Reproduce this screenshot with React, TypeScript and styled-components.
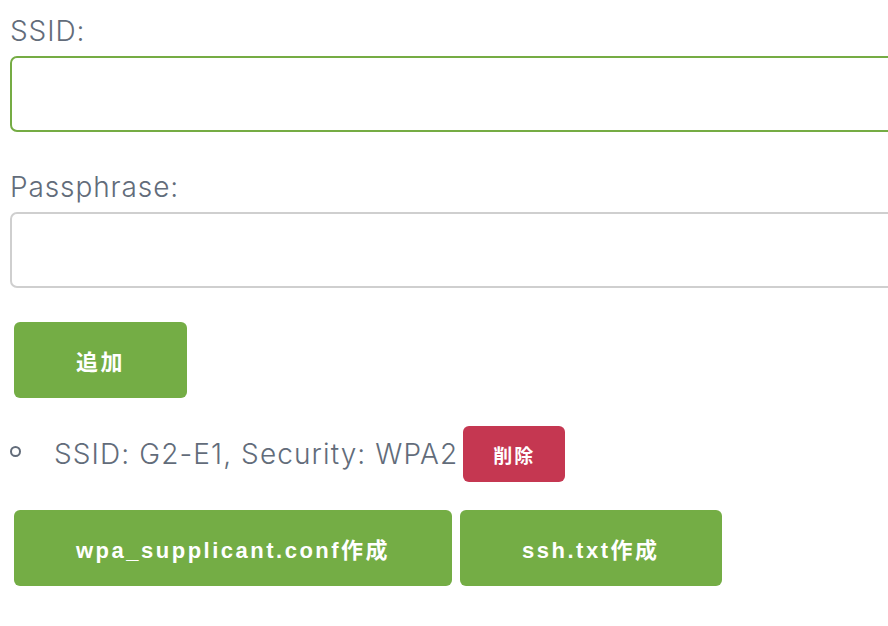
import React, { useEffect, useRef } from "react"
import styled, { createGlobalStyle } from "styled-components"

const GlobalStyle = createGlobalStyle`
  html, body {
    margin: 0;
    padding: 0;
    overflow: clip;
    background: #ffffff;
  }
  body {
    font-family: Inter, "Liberation Sans", "Noto Sans CJK JP", sans-serif;
  }
`

const networks = [{ ssid: "G2-E1", security: "WPA2" }]

export default function App() {
  const ssidRef = useRef<HTMLInputElement>(null)

  useEffect(() => {
    ssidRef.current?.focus({ preventScroll: true })
  }, [])

  return (
    <>
      <GlobalStyle />
      <StyledViewport>
        <StyledPage>
          <StyledField $gap={38}>
            <StyledLabel htmlFor="ssid">SSID:</StyledLabel>
            <StyledInput ref={ssidRef} id="ssid" type="text" $active />
          </StyledField>
          <StyledField $gap={34}>
            <StyledLabel htmlFor="pass">Passphrase:</StyledLabel>
            <StyledInput id="pass" type="text" />
          </StyledField>
          <StyledActions>
            <StyledButton>追加</StyledButton>
          </StyledActions>
          <StyledList>
            {networks.map((n) => (
              <StyledItem key={n.ssid}>
                SSID: {n.ssid}, Security: {n.security}
                <StyledButton $variant="danger" $small>
                  削除
                </StyledButton>
              </StyledItem>
            ))}
          </StyledList>
          <StyledActions>
            <StyledButton>wpa_supplicant.conf作成</StyledButton>
            <StyledButton>ssh.txt作成</StyledButton>
          </StyledActions>
        </StyledPage>
      </StyledViewport>
    </>
  )
}

const StyledViewport = styled.div`
  width: 100vw;
  height: 100vh;
  overflow: clip;
`

const StyledPage = styled.main`
  width: 1000px;
  padding: 14px 10px 0;
  display: flex;
  flex-direction: column;
`

const StyledField = styled.div<{ $gap: number }>`
  display: flex;
  flex-direction: column;
  margin-bottom: ${({ $gap }) => $gap}px;
`

const StyledLabel = styled.label`
  font-size: 28px;
  font-weight: 300;
  line-height: 34px;
  letter-spacing: 0.9px;
  color: #626c7a;
  margin-bottom: 8px;
`

const StyledInput = styled.input<{ $active?: boolean }>`
  box-sizing: border-box;
  height: 76px;
  width: 100%;
  border: 2px solid ${({ $active }) => ($active ? "#75ac44" : "#cfcfcf")};
  border-radius: 7px;
  padding: 0 21px;
  font-size: 30px;
  font-family: inherit;
  color: #333;
  caret-color: #000;
  outline: none;
`

const StyledActions = styled.div`
  display: flex;
  gap: 8px;
  padding-left: 4px;
`

const StyledButton = styled.button<{ $variant?: "danger"; $small?: boolean }>`
  height: ${({ $small }) => ($small ? "56px" : "76px")};
  padding: ${({ $small }) => ($small ? "0 30px" : "0 62px")};
  border: none;
  border-radius: 6px;
  background: ${({ $variant }) => ($variant === "danger" ? "#c53751" : "#74ad45")};
  color: #ffffff;
  font-family: "Liberation Sans", "Noto Sans CJK JP", sans-serif;
  font-weight: 700;
  font-size: ${({ $small }) => ($small ? "19px" : "22px")};
  letter-spacing: ${({ $small }) => ($small ? "2px" : "2.5px")};
  cursor: pointer;
`

const StyledList = styled.ul`
  list-style: none;
  margin: 28px 0;
  padding: 0;
  color: #626c7a;
  font-size: 28px;
  font-weight: 300;
  letter-spacing: 1.1px;
`

const StyledItem = styled.li`
  display: flex;
  align-items: center;
  &::before {
    content: "";
    box-sizing: border-box;
    width: 11px;
    height: 11px;
    border: 2px solid #626c7a;
    border-radius: 50%;
    margin-right: 33px;
    margin-top: -6px;
  }
  & > button {
    margin-left: 5px;
  }
`
